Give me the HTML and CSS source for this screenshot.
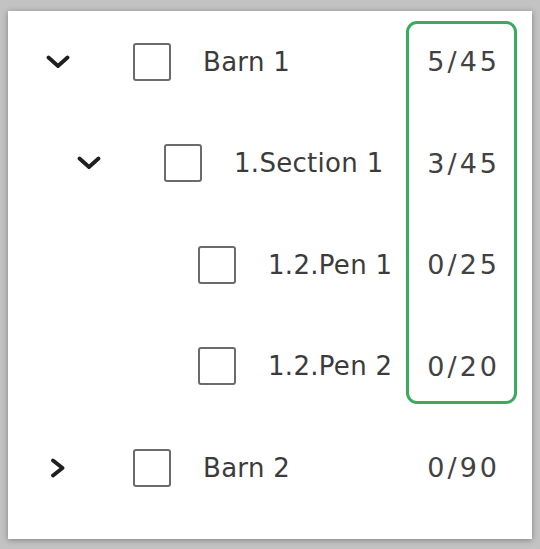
FILE: index.html
```html
<!DOCTYPE html>
<html>
<head>
<meta charset="utf-8">
<link rel="stylesheet" href="styles.css">
</head>
<body>
<div class="panel">
  <div class="highlight"></div>
  <div class="row level-0">
    <span class="toggle"><svg viewBox="0 0 24 14" width="24" height="14"><path d="M2.5 2.5 L12 11 L21.5 2.5" fill="none" stroke="#1f1f1f" stroke-width="3.8" stroke-linecap="round" stroke-linejoin="round"/></svg></span>
    <span class="box"></span>
    <span class="label">Barn 1</span>
    <span class="count">5/45</span>
  </div>
  <div class="row level-1">
    <span class="toggle"><svg viewBox="0 0 24 14" width="24" height="14"><path d="M2.5 2.5 L12 11 L21.5 2.5" fill="none" stroke="#1f1f1f" stroke-width="3.8" stroke-linecap="round" stroke-linejoin="round"/></svg></span>
    <span class="box"></span>
    <span class="label">1.Section 1</span>
    <span class="count">3/45</span>
  </div>
  <div class="row level-2">
    <span class="toggle"></span>
    <span class="box"></span>
    <span class="label">1.2.Pen 1</span>
    <span class="count">0/25</span>
  </div>
  <div class="row level-2">
    <span class="toggle"></span>
    <span class="box"></span>
    <span class="label">1.2.Pen 2</span>
    <span class="count">0/20</span>
  </div>
  <div class="row level-0">
    <span class="toggle"><svg viewBox="0 0 16 20" width="16" height="20"><path d="M3 2.5 L12.5 10 L3 17.5" fill="none" stroke="#1f1f1f" stroke-width="3.8" stroke-linecap="round" stroke-linejoin="round"/></svg></span>
    <span class="box"></span>
    <span class="label">Barn 2</span>
    <span class="count">0/90</span>
  </div>
</div>
</body>
</html>
```
FILE: styles.css
```css
html, body {
  margin: 0;
  padding: 0;
  background: #c3c3c3;
}
body {
  padding: 11px 8px 10px 8px;
  font-family: "DejaVu Sans", "Inter", sans-serif;
}
.panel {
  position: relative;
  width: 524px;
  height: 528px;
  box-sizing: border-box;
  background: #ffffff;
  box-shadow: 0 1px 6px rgba(0,0,0,0.35);
}
.highlight {
  position: absolute;
  left: 398px;
  top: 10px;
  width: 111px;
  height: 383px;
  box-sizing: border-box;
  border: 3px solid #3aaa5e;
  border-radius: 11px;
}
.row {
  display: flex;
  align-items: center;
  height: 101.5px;
  padding-right: 35px;
  padding-left: 30px;
}
.level-1 { padding-left: 61px; }
.level-2 { padding-left: 95px; }
.toggle {
  width: 40px;
  height: 30px;
  display: flex;
  align-items: center;
  justify-content: center;
  margin-right: 55px;
}
.box {
  width: 38px;
  height: 38px;
  box-sizing: border-box;
  border: 2px solid #6b6b6b;
  border-radius: 3px;
  margin-right: 32px;
  flex: none;
}
.label {
  font-size: 26px;
  color: #3b3b3b;
  letter-spacing: 0.3px;
}
.count {
  margin-left: auto;
  font-size: 27px;
  color: #424242;
  letter-spacing: 3px;
  margin-right: -3px;
}
```
